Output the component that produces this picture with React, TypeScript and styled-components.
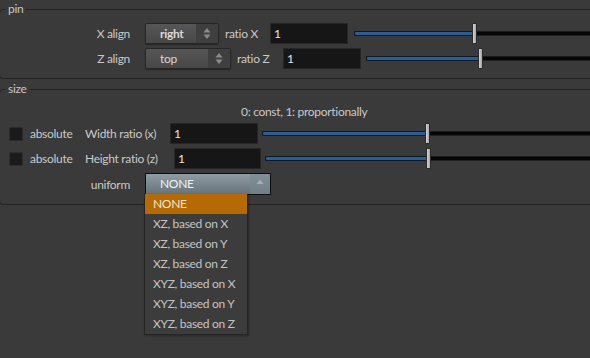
import React from "react";
import styled, { createGlobalStyle } from "styled-components";

const Global = createGlobalStyle`
  html, body { margin: 0; padding: 0; background: #3a3a3a; overflow: hidden; }
  body { font-family: Lato, "Open Sans", sans-serif; font-size: 12px; letter-spacing: -0.3px; color: #c9c9c9; }
  * { box-sizing: border-box; }
`;

const Page = styled.div`
  width: 600px;
  height: 358px;
  padding-top: 1px;
  margin-left: -1px;
`;

const Group = styled.fieldset<{ $top?: number; $pt: number; $pb: number }>`
  margin: ${(p) => p.$top ?? 0}px 0 0 0;
  padding: ${(p) => p.$pt}px 0 ${(p) => p.$pb}px 0;
  border: 1px solid #232323;
  border-radius: 4px;
  min-width: 0;
  display: flex;
  flex-direction: column;
`;

const Legend = styled.legend`
  margin-left: 5px;
  padding: 0 3px;
  line-height: 16px;
  height: 16px;
  color: #c6c6c6;
`;

const Row = styled.div<{ $mt?: number; $h?: number }>`
  display: flex;
  align-items: center;
  height: ${(p) => p.$h ?? 21}px;
  margin-top: ${(p) => p.$mt ?? 0}px;
`;

const Label = styled.div<{ $w: number; $right?: boolean; $pl?: number }>`
  width: ${(p) => p.$w}px;
  flex: none;
  text-align: ${(p) => (p.$right ? "right" : "left")};
  padding-left: ${(p) => p.$pl ?? 0}px;
  white-space: nowrap;
`;

const Hint = styled.div`
  padding-left: 241px;
  line-height: 16px;
  height: 16px;
`;

const MenuButton = styled.div<{ $w: number }>`
  width: ${(p) => p.$w}px;
  height: 21px;
  flex: none;
  margin-left: 15px;
  display: flex;
  border: 1px solid #262626;
  border-radius: 2px;
  background: linear-gradient(#565656, #474747);
  box-shadow: 0 1px 1px rgba(0, 0, 0, 0.35);
  overflow: hidden;
`;

const MenuText = styled.div<{ $bold?: boolean }>`
  flex: 1;
  padding-left: 14px;
  line-height: 19px;
  color: #d8d8d8;
  font-weight: ${(p) => (p.$bold ? 700 : 400)};
`;

const ArrowBox = styled.div`
  width: 22px;
  flex: none;
  background: #3f3f3f;
  display: flex;
  align-items: center;
  justify-content: center;
`;

const Field = styled.div<{ $w: number }>`
  width: ${(p) => p.$w}px;
  height: 21px;
  flex: none;
  background: #161616;
  border: 1px solid #262626;
  padding-left: 3px;
  line-height: 19px;
  color: #e6e6e6;
`;

const SliderWrap = styled.div<{ $ml: number }>`
  flex: 1;
  margin-left: ${(p) => p.$ml}px;
  height: 21px;
  position: relative;
  display: flex;
  align-items: center;
`;

const Track = styled.div`
  flex: 1;
  height: 5px;
  background: #050505;
  border-top: 1px solid #1a1a1a;
  border-bottom: 1px solid #5a5a5a55;
  position: relative;
`;

const Fill = styled.div`
  position: absolute;
  left: 0;
  top: -1px;
  height: 5px;
  background: #2e5c94;
  border: 1px solid #0d1a2a;
  border-radius: 2px;
`;

const Handle = styled.div`
  position: absolute;
  top: 0;
  width: 5px;
  height: 21px;
  background: linear-gradient(90deg, #d4d4d4, #a5a5a5);
  border: 1px solid #2a2a2a;
  border-radius: 1px;
`;

const Check = styled.div`
  width: 14px;
  height: 14px;
  flex: none;
  margin-left: 9px;
  margin-right: 7px;
  background: #1b1b1b;
  border: 1px solid #2d2d2d;
`;

const Combo = styled.div`
  position: relative;
  margin-left: 15px;
  width: 126px;
  height: 22px;
  flex: none;
`;

const ComboFace = styled.div`
  height: 22px;
  display: flex;
  border: 1px solid #0e0e0e;
  background: linear-gradient(#8e9ca4, #66737a);
`;

const ComboText = styled.div`
  flex: 1;
  padding-left: 14px;
  line-height: 20px;
  color: #f2f2f2;
`;

const ComboArrow = styled.div`
  width: 20px;
  display: flex;
  justify-content: center;
  padding-top: 5px;
  background: rgba(120, 135, 143, 0.6);
`;

const List = styled.div`
  position: absolute;
  left: -1px;
  top: 21px;
  width: 104px;
  background: #3c3c3c;
  border: 1px solid #252525;
  border-top: none;
  box-shadow: 1px 1px 2px rgba(0, 0, 0, 0.3);
  z-index: 2;
`;

const Item = styled.div<{ $active?: boolean }>`
  height: 20px;
  line-height: 20px;
  padding-left: 8px;
  white-space: nowrap;
  background: ${(p) => (p.$active ? "#b66a05" : "transparent")};
  color: ${(p) => (p.$active ? "#f3e6cf" : "#c4c4c4")};
`;

const UpDown = () => (
  <svg width="8" height="13" viewBox="0 0 8 13">
    <path d="M4 1 L7.5 5.5 L0.5 5.5 Z" fill="#8c8c8c" />
    <path d="M4 12 L7.5 7.5 L0.5 7.5 Z" fill="#8c8c8c" />
  </svg>
);

const Up = () => (
  <svg width="8" height="6" viewBox="0 0 8 6">
    <path d="M4 0.5 L7.5 5 L0.5 5 Z" fill="#9fb0b8" />
  </svg>
);

function Slider({ ml, fill }: { ml: number; fill: number }) {
  return (
    <SliderWrap $ml={ml}>
      <Track>
        <Fill style={{ width: fill + 2 }} />
      </Track>
      <Handle style={{ left: fill }} />
    </SliderWrap>
  );
}

const options = [
  "NONE",
  "XZ, based on X",
  "XZ, based on Y",
  "XZ, based on Z",
  "XYZ, based on X",
  "XYZ, based on Y",
  "XYZ, based on Z",
];

export default function App() {
  return (
    <>
      <Global />
      <Page>
        <Group $pt={6} $pb={9}>
          <Legend>pin</Legend>
          <Row>
            <Label $w={130} $right>X align</Label>
            <MenuButton $w={74}>
              <MenuText $bold>right</MenuText>
              <ArrowBox><UpDown /></ArrowBox>
            </MenuButton>
            <Label $w={51} $pl={6}>ratio X</Label>
            <Field $w={78}>1</Field>
            <Slider ml={6} fill={118} />
          </Row>
          <Row $mt={4}>
            <Label $w={130} $right>Z align</Label>
            <MenuButton $w={86}>
              <MenuText>top</MenuText>
              <ArrowBox><UpDown /></ArrowBox>
            </MenuButton>
            <Label $w={52} $pl={6}>ratio Z</Label>
            <Field $w={78}>1</Field>
            <Slider ml={5} fill={112} />
          </Row>
        </Group>
        <Group $top={2} $pt={7} $pb={9}>
          <Legend>size</Legend>
          <Hint>0: const, 1: proportionally</Hint>
          <Row $mt={3}>
            <Check />
            <Label $w={55}>absolute</Label>
            <Label $w={85}>Width ratio (x)</Label>
            <Field $w={88}>1</Field>
            <Slider ml={4} fill={163} />
          </Row>
          <Row $mt={4}>
            <Check />
            <Label $w={55}>absolute</Label>
            <Label $w={89}>Height ratio (z)</Label>
            <Field $w={87}>1</Field>
            <Slider ml={4} fill={161} />
          </Row>
          <Row $mt={4} $h={22}>
            <Label $w={130} $right>uniform</Label>
            <Combo>
              <ComboFace>
                <ComboText>NONE</ComboText>
                <ComboArrow><Up /></ComboArrow>
              </ComboFace>
              <List>
                {options.map((o, i) => (
                  <Item key={o} $active={i === 0}>{o}</Item>
                ))}
              </List>
            </Combo>
          </Row>
        </Group>
      </Page>
    </>
  );
}
